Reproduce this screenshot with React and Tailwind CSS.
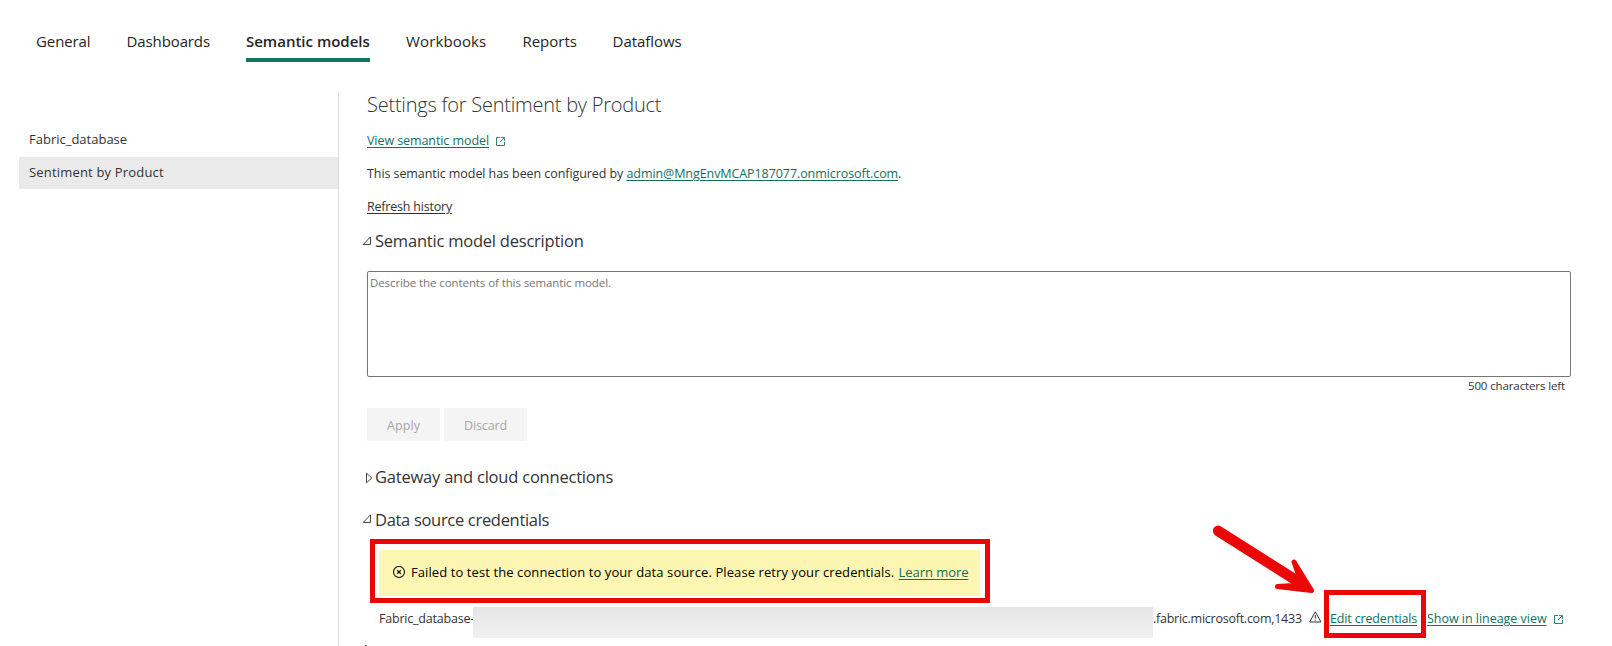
import { clsx } from "clsx";

const tabs = [
  { label: "General", style: "w-[54.6px] tracking-[-0.1px]" },
  { label: "Dashboards", style: "w-[83.4px] tracking-[-0.12px]" },
  { label: "Semantic models", style: "w-[124px]", active: true },
  { label: "Workbooks", style: "w-[80.4px] tracking-[0.14px]" },
  { label: "Reports", style: "w-[54.2px]" },
  { label: "Dataflows", style: "w-[69px] tracking-[-0.06px]" },
];

function ExternalIcon() {
  return (
    <svg className="h-[9px] w-[9px] shrink-0" viewBox="0 0 9 9" fill="none" stroke="#2f8079">
      <path d="M4 0.5H0.5V8.5H8.5V5" />
      <path d="M4.8 0.5H8.5V4.2M8.3 0.7L3.8 5.2" strokeWidth="0.9" />
    </svg>
  );
}

function OpenCaret() {
  return (
    <svg className="h-[9px] w-[9px] shrink-0 -translate-y-px" viewBox="0 0 9 9" fill="none" stroke="#444" strokeWidth="1">
      <path d="M8.5 0.8V8.5H1.2Z" />
    </svg>
  );
}

function ClosedCaret() {
  return (
    <svg className="h-3 w-2 shrink-0" viewBox="0 0 8 12" fill="none" stroke="#444" strokeWidth="1">
      <path d="M1.5 1.2V10.8L6.8 6Z" />
    </svg>
  );
}

export default function App() {
  return (
    <div className="flex h-[646px] w-[1612px] flex-col overflow-hidden bg-white font-['Open_Sans',sans-serif] whitespace-nowrap text-[#333]">
      <nav className="flex h-[93px] shrink-0 gap-9 pt-6 pl-9 text-[15px] text-[#252423]">
        {tabs.map((t) => (
          <a
            key={t.label}
            className={clsx(
              "block h-[38px] border-b-4 leading-[34px]",
              t.style,
              t.active ? "border-[#117865] font-semibold" : "border-transparent"
            )}
          >
            {t.label}
          </a>
        ))}
      </nav>

      <div className="flex min-h-0 flex-1">
        <aside className="w-[339px] shrink-0 border-r border-[#dcdcdc] pt-[30px] pl-[19px] text-[13px]">
          <div className="h-[34px] pl-2.5 leading-[33px]">Fabric_database</div>
          <div className="h-8 bg-[#eaeaea] pl-2.5 leading-[31px] tracking-[0.18px]">Sentiment by Product</div>
        </aside>

        <main className="relative flex flex-1 flex-col pl-7 text-[12.5px] *:shrink-0">
          <h1 className="h-[31px] text-[20px] leading-[23px] font-light tracking-[-0.23px]">
            Settings for Sentiment by Product
          </h1>
          <div className="flex h-[33px] items-center">
            <a className="w-[122px] leading-[33px] tracking-[-0.08px] text-[#0f7060] underline underline-offset-2">View semantic model</a>
            <span className="mt-px ml-[7px]"><ExternalIcon /></span>
          </div>
          <div className="h-[33px] leading-[33px] tracking-[-0.075px]">
            This semantic model has been configured by{" "}
            <a className="text-[#0f7060] underline underline-offset-2">admin@MngEnvMCAP187077.onmicrosoft.com</a>.
          </div>
          <div className="h-[33px] leading-[33px] tracking-[-0.2px]">
            <a className="underline underline-offset-2">Refresh history</a>
          </div>

          <div className="-ml-[5px] flex h-9 items-center text-[16.5px] tracking-[-0.22px]">
            <OpenCaret />
            <h2 className="ml-1 leading-9">Semantic model description</h2>
          </div>
          <div className="mt-3 h-[106px] w-[1204px] rounded-xs border border-[#767676] pt-px pl-0.5 text-[11.5px] leading-5 tracking-[-0.09px] text-[#757575]">
            Describe the contents of this semantic model.
          </div>
          <div className="flex h-[17px] w-[1198px] justify-end text-[11.5px] leading-[17px] tracking-[-0.12px]">
            500 characters left
          </div>

          <div className="mt-3.5 flex gap-1 leading-[33px] text-[#a6a6a6]">
            <button className="h-[33px] w-[73px] bg-[#f4f4f4] pt-px tracking-[0.07px]">Apply</button>
            <button className="h-[33px] w-[83px] bg-[#f4f4f4] pt-px tracking-[-0.12px]">Discard</button>
          </div>

          <div className="mt-4 -ml-0.5 flex h-[42px] items-center text-[16.5px] tracking-[-0.21px]">
            <ClosedCaret />
            <h2 className="ml-0.5 pb-0.5 leading-10">Gateway and cloud connections</h2>
          </div>
          <div className="-ml-[5px] flex h-10 items-center text-[16.5px] tracking-[-0.31px]">
            <OpenCaret />
            <h2 className="ml-1 leading-[41px]">Data source credentials</h2>
          </div>

          <div className="ml-[3px] h-16 w-[620px] border-[5px] border-[#ea0707] pt-1.5 pl-1">
            <div className="flex h-[46px] w-[601px] items-start bg-[#fdf6b2] pl-3.5 text-[13px] leading-[45px] text-black">
              <svg className="mt-4 mr-[5px] h-[13px] w-[13px] shrink-0" viewBox="0 0 13 13" fill="none" stroke="#111" strokeWidth="1.1">
                <circle cx="6" cy="6" r="5.5" />
                <path d="M4.1 4.1L7.9 7.9M7.9 4.1L4.1 7.9" strokeWidth="1.3" />
              </svg>
              <span className="w-[487.5px] tracking-[0.09px]">
                Failed to test the connection to your data source. Please retry your credentials.
              </span>
              <a className="tracking-[-0.05px] text-[#0f7060] underline underline-offset-2">Learn more</a>
            </div>
          </div>

          <div className="mt-1 ml-3 flex h-[31px] items-start leading-[23px]">
            <span className="w-[94px] tracking-[-0.21px]">Fabric_database-</span>
            <span className="h-[31px] w-[680px] bg-linear-to-b from-[#e5e5e5] to-[#f1f1f1]" />
            <span className="w-[156px] tracking-[-0.25px]">.fabric.microsoft.com,1433</span>
            <svg className="mt-1 h-3 w-[13px] shrink-0" viewBox="0 0 13 12" fill="none" stroke="#333">
              <path d="M6.3 0.8L12 11H0.6Z" strokeLinejoin="round" />
              <path d="M6.3 4V7.6M6.3 8.6V9.7" />
            </svg>
            <a className="ml-2 w-[97px] tracking-[-0.16px] text-[#0f7060] underline underline-offset-2">Edit credentials</a>
            <a className="w-[127px] tracking-[-0.03px] text-[#0f7060] underline underline-offset-2">Show in lineage view</a>
            <span className="mt-2"><ExternalIcon /></span>
          </div>
          <svg className="mt-1.5 -ml-1 h-1 w-2" viewBox="0 0 8 4" fill="none" stroke="#444">
            <path d="M2.5 4V1L5.5 4" />
          </svg>

          <div className="absolute top-[497px] left-[985px] h-12 w-[102px] border-[5px] border-[#ea0707]" />
          <svg
            className="absolute top-[427px] left-[867px] h-[80px] w-[112px]"
            viewBox="0 0 112 80"
            fill="#ea0707"
            stroke="#ea0707"
            strokeLinecap="round"
            strokeLinejoin="round"
          >
            <path d="M12.2 10.9L92 61.5" strokeWidth="10.6" />
            <path d="M88 42L105.5 70.5L71.5 66.5L88 65.5L94 59Z" strokeWidth="5" />
          </svg>
        </main>
      </div>
    </div>
  );
}
